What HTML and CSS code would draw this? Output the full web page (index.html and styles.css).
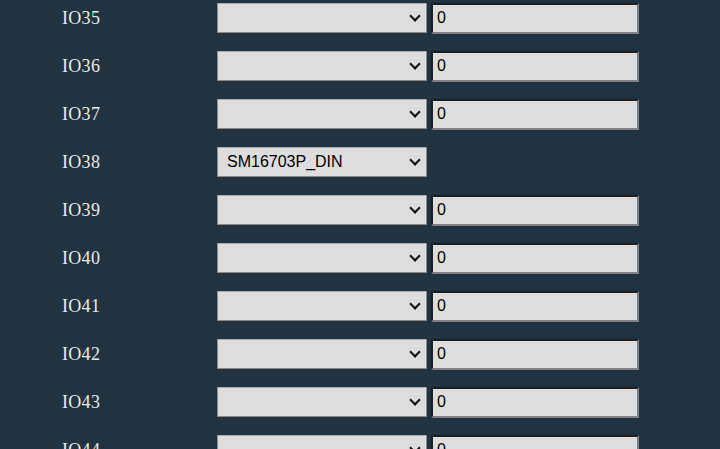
FILE: index.html
```html
<!DOCTYPE html>
<html>
<head>
<meta charset="utf-8">
<link rel="stylesheet" href="styles.css">
</head>
<body>
<div class="gpio">
  <div class="row"><span class="lbl">IO35</span><div class="sel"><span class="val"></span><span class="arr"></span></div><div class="inp">0</div></div>
  <div class="row"><span class="lbl">IO36</span><div class="sel"><span class="val"></span><span class="arr"></span></div><div class="inp">0</div></div>
  <div class="row"><span class="lbl">IO37</span><div class="sel"><span class="val"></span><span class="arr"></span></div><div class="inp">0</div></div>
  <div class="row"><span class="lbl">IO38</span><div class="sel"><span class="val">SM16703P_DIN</span><span class="arr"></span></div></div>
  <div class="row"><span class="lbl">IO39</span><div class="sel"><span class="val"></span><span class="arr"></span></div><div class="inp">0</div></div>
  <div class="row"><span class="lbl">IO40</span><div class="sel"><span class="val"></span><span class="arr"></span></div><div class="inp">0</div></div>
  <div class="row"><span class="lbl">IO41</span><div class="sel"><span class="val"></span><span class="arr"></span></div><div class="inp">0</div></div>
  <div class="row"><span class="lbl">IO42</span><div class="sel"><span class="val"></span><span class="arr"></span></div><div class="inp">0</div></div>
  <div class="row"><span class="lbl">IO43</span><div class="sel"><span class="val"></span><span class="arr"></span></div><div class="inp">0</div></div>
  <div class="row"><span class="lbl">IO44</span><div class="sel"><span class="val"></span><span class="arr"></span></div><div class="inp">0</div></div>
</div>
</body>
</html>
```
FILE: styles.css
```css
html, body {
  margin: 0;
  padding: 0;
  background: #213240;
  overflow: hidden;
  height: 449px;
}
.gpio {
  margin-top: -6px;
  padding-left: 62px;
  display: flex;
  flex-direction: column;
}
.row {
  height: 48px;
  display: flex;
  align-items: center;
}
.lbl {
  width: 155px;
  font-family: "Liberation Serif", serif;
  font-size: 18px;
  letter-spacing: 0.3px;
  color: #eaeaea;
  padding-top: 1px;
}
.sel {
  box-sizing: border-box;
  width: 210px;
  height: 30px;
  background: #dddddd;
  border: 1px solid #8a8a8a;
  border-top-color: #a9a9a9;
  display: flex;
  align-items: center;
  padding: 0 6px 0 9px;
  font-family: "Liberation Sans", Arial, sans-serif;
  font-size: 16px;
  color: #000;
}
.val {
  flex: 1;
}
.arr {
  width: 6px;
  height: 6px;
  border-right: 2px solid #111;
  border-bottom: 2px solid #111;
  transform: rotate(45deg);
  margin-bottom: 4px;
  margin-right: 1px;
}
.inp {
  box-sizing: border-box;
  width: 208px;
  height: 31px;
  margin-left: 4px;
  background: #dddddd;
  border: 2px solid;
  border-color: #1a1f24 #808080 #808080 #1a1f24;
  font-family: "Liberation Sans", Arial, sans-serif;
  font-size: 16px;
  color: #000;
  display: flex;
  align-items: center;
  padding-left: 4px;
}
```
